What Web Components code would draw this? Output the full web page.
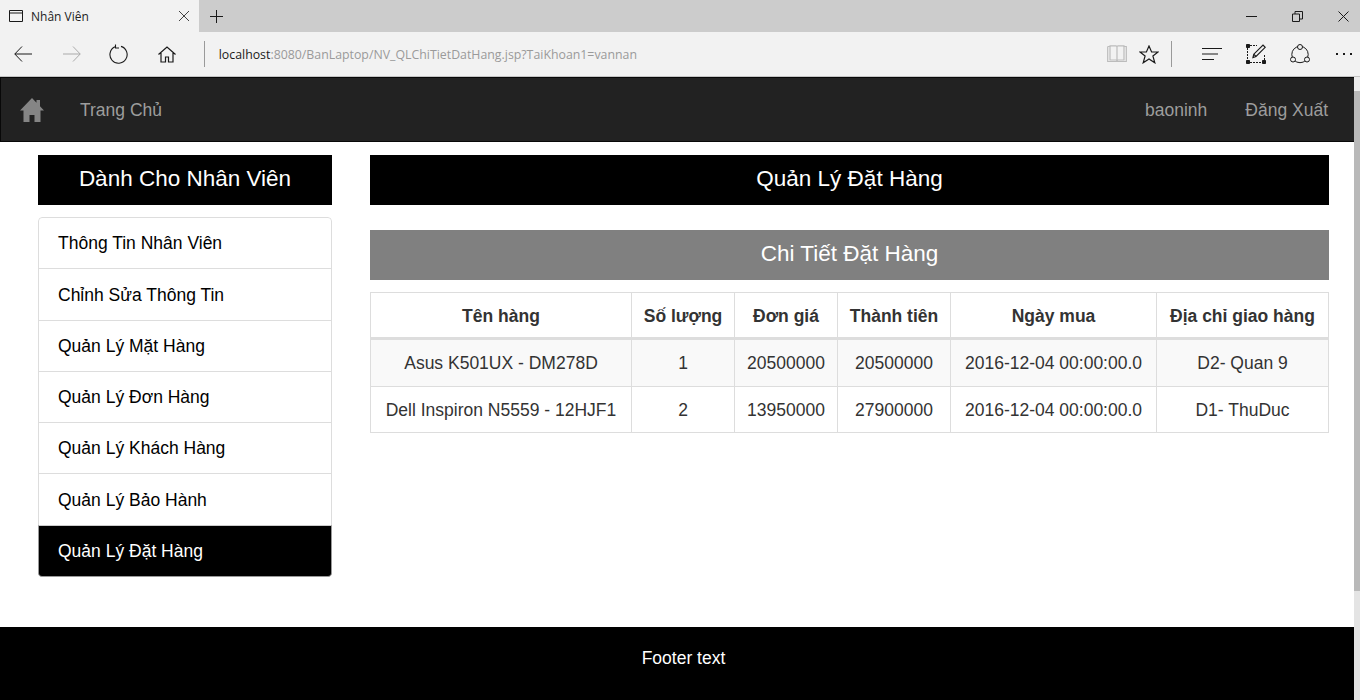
<!DOCTYPE html>
<html lang="vi">
<head>
<meta charset="utf-8">
<title>Nhân Viên</title>
<style>
  html, body { margin: 0; height: 100%; overflow: hidden; background: #fff; }
  body { display: flex; flex-direction: column; font-family: "Liberation Sans", Arial, sans-serif; }
  .viewport { flex: 1; min-height: 0; display: flex; }
  .page { flex: 1; min-width: 0; display: flex; flex-direction: column; }
  .content { height: 485px; display: flex; gap: 38px; padding: 13px 25px 0 38px; box-sizing: border-box; }
  .side { width: 294px; flex: none; }
  .main { flex: 1; min-width: 0; }
</style>
</head>
<body>
  <browser-chrome></browser-chrome>
  <div class="viewport">
    <div class="page">
      <site-navbar></site-navbar>
      <div class="content">
        <div class="side">
          <section-title>Dành Cho Nhân Viên</section-title>
          <side-menu>
            <menu-item>Thông Tin Nhân Viên</menu-item>
            <menu-item>Chỉnh Sửa Thông Tin</menu-item>
            <menu-item>Quản Lý Mặt Hàng</menu-item>
            <menu-item>Quản Lý Đơn Hàng</menu-item>
            <menu-item>Quản Lý Khách Hàng</menu-item>
            <menu-item>Quản Lý Bảo Hành</menu-item>
            <menu-item active>Quản Lý Đặt Hàng</menu-item>
          </side-menu>
        </div>
        <div class="main">
          <section-title>Quản Lý Đặt Hàng</section-title>
          <section-title variant="sub">Chi Tiết Đặt Hàng</section-title>
          <order-table></order-table>
        </div>
      </div>
      <site-footer>Footer text</site-footer>
    </div>
    <page-scrollbar></page-scrollbar>
  </div>

<script>
class BrowserChrome extends HTMLElement {
  constructor() {
    super();
    this.attachShadow({ mode: "open" });
  }

  static get styles() {
    return /* css */`
      :host {
        display: block;
        font-family: "Open Sans", "Noto Sans", sans-serif;
        color: #222;
      }

      svg {
        display: block;
        fill: none;
        stroke: #1a1a1a;
        stroke-width: 1;
      }

      .tabs {
        height: 32px;
        background: #ccc;
        display: flex;
        align-items: center;
      }

      .tab {
        width: 199px;
        height: 100%;
        background: #f2f2f2;
        display: flex;
        align-items: center;
        box-sizing: border-box;
        padding-left: 9px;
      }

      .tab .title {
        flex: 1;
        margin-left: 8px;
        font-size: 12px;
      }

      .tab .close {
        margin-right: 10px;
      }

      .plus {
        margin-left: 11px;
      }

      .win {
        margin-left: auto;
        margin-right: -6px;
        display: flex;
      }

      .win div {
        width: 46px;
        height: 32px;
        display: grid;
        place-items: center;
      }

      .bar {
        height: 44px;
        background: #f2f2f2;
        border-bottom: 1px solid #c4c4c4;
        display: flex;
        align-items: center;
      }

      .btn {
        width: 47.7px;
        height: 100%;
        display: grid;
        place-items: center;
        flex: none;
      }

      .btn.s {
        width: 32px;
      }

      .btn.m {
        width: 44px;
      }

      .sep {
        width: 1px;
        height: 26px;
        background: #9a9a9a;
        flex: none;
      }

      .url {
        flex: 1;
        margin-left: 14px;
        font-size: 12.33px;
        color: #9a9a9a;
        white-space: nowrap;
      }

      .url b {
        font-weight: 400;
        color: #1a1a1a;
      }
    `;
  }

  connectedCallback() {
    this.render();
  }

  render() {
    this.shadowRoot.innerHTML = /* html */`
    <style>${BrowserChrome.styles}</style>
    <div class="tabs">
      <div class="tab">
        <svg width="14" height="12" viewBox="0 0 14 12"><path d="M.5.5h13v11H.5zM.5 3h13" /></svg>
        <span class="title">Nhân Viên</span>
        <svg class="close" width="10" height="10" viewBox="0 0 10 10"><path d="M0 0l10 10M10 0L0 10" stroke="#444" /></svg>
      </div>
      <svg class="plus" width="13" height="13" viewBox="0 0 13 13"><path d="M6.5 0v13M0 6.5h13" /></svg>
      <div class="win">
        <div><svg width="11" height="11" viewBox="0 0 11 11"><path d="M0 5.5h11" /></svg></div>
        <div><svg width="11" height="11" viewBox="0 0 11 11"><path d="M.5 3h7v7.500h-7zM3 3V.5h7.500V8H7.500" /></svg></div>
        <div><svg width="11" height="11" viewBox="0 0 11 11"><path d="M.5.5l10 10M10.500.5l-10 10" /></svg></div>
      </div>
    </div>
    <div class="bar">
      <div class="btn"><svg width="18" height="16" viewBox="0 0 18 16" style="margin-right:2px"><path d="M18 8H.8M8 .5L.8 8 8 15.500" /></svg></div>
      <div class="btn"><svg width="18" height="16" viewBox="0 0 18 16" style="stroke:#aaa"><path d="M0 8h17.200M10 .5L17.200 8 10 15.500" /></svg></div>
      <div class="btn"><svg width="20" height="20" viewBox="0 0 20 20"><path d="M6 2.800a8.600 8.600 0 1 0 6-.4M6.500.500V4H10" stroke-width="1.100" /></svg></div>
      <div class="btn"><svg width="18" height="17" viewBox="0 0 18 17"><path d="M.5 8.500L9 1l8.500 7.500M3 7v9h4.500v-5h3v5H15V7" stroke-width="1.200" /></svg></div>
      <div class="sep" style="margin-left:13px"></div>
      <div class="url"><b>localhost</b>:8080/BanLaptop/NV_QLChiTietDatHang.jsp?TaiKhoan1=vannan</div>
      <div class="btn s"><svg width="20" height="18" viewBox="0 0 20 18" style="stroke:#bcbcbc"><path d="M.7 1.500h3M.7 1.500V16.500h18.600V1.500h-3M3 .8h6q1 0 1 1.500 0-1.500 1-1.500h6V15h-6q-1 0-1 1 0-1-1-1H3zM10 2.300V16" stroke-width="1.200" /></svg></div>
      <div class="btn s"><svg width="20" height="19" viewBox="0 0 20 19"><path d="M10 1l2.600 6h6.400l-5.100 4 1.900 6.800L10 14l-5.800 3.800L6.100 11 1 7h6.400z" stroke-width="1.200" /></svg></div>
      <div class="sep" style="margin-left:6px"></div>
      <div class="btn m" style="margin-left:18px"><svg width="20" height="14" viewBox="0 0 20 14"><path d="M0 1.500h20M0 7h16M0 12.500h12" stroke-width="1.200" /></svg></div>
      <div class="btn m"><svg width="20" height="20" viewBox="0 0 20 20"><path d="M1.500 4v12M18.500 11v5M4 1.500h7M4 18.500h12" stroke-dasharray="2 1" /><path d="M.5.500h3v3h-3zM.5 16.500h3v3h-3zM16.500 16.500h3v3h-3z" fill="#1a1a1a" /><path d="M7 13.500l.8-3.300L17 1l2.200 2.300L10 12.500zM7.800 10.200l2.200 2.300" stroke-width="1.200" /></svg></div>
      <div class="btn m"><svg width="20" height="20" viewBox="0 0 20 20"><circle cx="10" cy="10.500" r="8.200" /><circle cx="10" cy="3" r="2.500" fill="#f2f2f2" /><circle cx="3" cy="15.500" r="2.500" fill="#f2f2f2" /><circle cx="17" cy="15.500" r="2.500" fill="#f2f2f2" /></svg></div>
      <div class="btn s" style="margin-left:6px"><svg width="18" height="4" viewBox="0 0 18 4"><path d="M1 2h2M8 2h2M15 2h2" stroke-width="2" /></svg></div>
    </div>`;
  }
}

class SiteNavbar extends HTMLElement {
  constructor() {
    super();
    this.attachShadow({ mode: "open" });
  }

  static get styles() {
    return /* css */`
      :host {
        display: block;
        flex: none;
      }

      nav {
        height: 65px;
        box-sizing: border-box;
        background: #222;
        border: 1px solid #080808;
        border-right: 0;
        display: flex;
        align-items: center;
        padding: 2px 26px 0 19px;
        font-size: 17.5px;
        color: #9d9d9d;
      }

      svg {
        display: block;
        fill: #858585;
      }

      .home {
        margin: -2px 36px 0 0;
      }

      .right {
        margin-left: auto;
        display: flex;
        gap: 38px;
      }
    `;
  }

  connectedCallback() {
    this.render();
  }

  render() {
    this.shadowRoot.innerHTML = /* html */`
    <style>${SiteNavbar.styles}</style>
    <nav>
      <svg class="home" width="24" height="24" viewBox="0 0 24 24"><path d="M12 0L0 12.500h3.500V24h6v-7h5v7h6V12.500H24l-4-4.200V2h-3.500v2.700z" /></svg>
      <span>Trang Chủ</span>
      <div class="right">
        <span>baoninh</span>
        <span>Đăng Xuất</span>
      </div>
    </nav>`;
  }
}

class SectionTitle extends HTMLElement {
  constructor() {
    super();
    this.attachShadow({ mode: "open" });
  }

  static get styles() {
    return /* css */`
      :host {
        display: block;
        height: 50px;
        line-height: 48px;
        background: #000;
        color: #fff;
        text-align: center;
        font-size: 22.5px;
      }

      :host([variant="sub"]) {
        background: #808080;
        margin-top: 25px;
      }
    `;
  }

  connectedCallback() {
    this.shadowRoot.innerHTML = /* html */`
    <style>${SectionTitle.styles}</style>
    <slot></slot>`;
  }
}

class SideMenu extends HTMLElement {
  constructor() {
    super();
    this.attachShadow({ mode: "open" });
  }

  connectedCallback() {
    this.shadowRoot.innerHTML = /* html */`
    <style>
      :host {
        display: block;
        margin-top: 12px;
      }

      .list {
        display: flex;
        flex-direction: column;
        border-radius: 4px;
        overflow: hidden;
      }
    </style>
    <div class="list"><slot></slot></div>`;
  }
}

class MenuItem extends HTMLElement {
  constructor() {
    super();
    this.attachShadow({ mode: "open" });
  }

  connectedCallback() {
    this.shadowRoot.innerHTML = /* html */`
    <style>
      :host {
        display: block;
        box-sizing: border-box;
        height: 52.3px;
        margin-bottom: -1px;
        padding: 13.300px 19px 11.300px;
        line-height: 25.700px;
        font-size: 17.5px;
        color: #000;
        background: #fff;
        border: 1px solid #ddd;
      }

      :host(:first-child) {
        border-radius: 4px 4px 0 0;
      }

      :host(:last-child) {
        margin-bottom: 0;
        border-radius: 0 0 4px 4px;
      }

      :host([active]) {
        background: #000;
        color: #fff;
        border-left-color: #999;
        border-right-color: #999;
        border-bottom-color: #999;
        border-top-color: #ccc;
      }
    </style>
    <slot></slot>`;
  }
}

class OrderTable extends HTMLElement {
  constructor() {
    super();
    this.attachShadow({ mode: "open" });
  }

  static get styles() {
    return /* css */`
      :host {
        display: block;
        margin-top: 12px;
      }

      table {
        width: 958px;
        table-layout: fixed;
        border-collapse: collapse;
        font-size: 17.5px;
        color: #333;
      }

      th, td {
        border: 1px solid #ddd;
        padding: 2px 0 0;
        text-align: center;
        font-weight: 400;
        white-space: nowrap;
      }

      th {
        height: 42px;
        font-weight: 700;
        border-bottom-width: 3px;
      }

      td {
        height: 43.5px;
      }

      tbody tr:nth-child(odd) {
        background: #f9f9f9;
      }
    `;
  }

  connectedCallback() {
    this.render();
  }

  render() {
    const widths = [261, 103, 103, 113, 206, 172];
    const heads = ["Tên hàng", "Số lượng", "Đơn giá", "Thành tiên", "Ngày mua", "Địa chỉ giao hàng"];
    const rows = [
      ["Asus K501UX - DM278D", "1", "20500000", "20500000", "2016-12-04 00:00:00.0", "D2- Quan 9"],
      ["Dell Inspiron N5559 - 12HJF1", "2", "13950000", "27900000", "2016-12-04 00:00:00.0", "D1- ThuDuc"]
    ];

    this.shadowRoot.innerHTML = /* html */`
    <style>${OrderTable.styles}</style>
    <table>
      <colgroup>${widths.map(w => `<col style="width:${w}px">`).join("")}</colgroup>
      <thead><tr>${heads.map(h => `<th>${h}</th>`).join("")}</tr></thead>
      <tbody>
        ${rows.map(r => `<tr>${r.map(c => `<td>${c}</td>`).join("")}</tr>`).join("")}
      </tbody>
    </table>`;
  }
}

class SiteFooter extends HTMLElement {
  constructor() {
    super();
    this.attachShadow({ mode: "open" });
  }

  connectedCallback() {
    this.shadowRoot.innerHTML = /* html */`
    <style>
      :host {
        display: block;
        flex: 1;
        background: #000;
        color: #fff;
        font-size: 17.5px;
        text-align: center;
        line-height: 20px;
        padding: 21px 0 0 13px;
      }
    </style>
    <slot></slot>`;
  }
}

class PageScrollbar extends HTMLElement {
  constructor() {
    super();
    this.attachShadow({ mode: "open" });
  }

  connectedCallback() {
    this.shadowRoot.innerHTML = /* html */`
    <style>
      :host {
        display: block;
        flex: none;
        width: 6px;
        background: #e4e4e4;
      }

      .arrow {
        height: 14px;
        background: #ececec;
        color: #888;
      }

      .thumb {
        height: 500px;
        background: #b9b9b9;
      }
    </style>
    <div class="arrow"></div>
    <div class="thumb"></div>`;
  }
}

customElements.define("browser-chrome", BrowserChrome);
customElements.define("site-navbar", SiteNavbar);
customElements.define("section-title", SectionTitle);
customElements.define("side-menu", SideMenu);
customElements.define("menu-item", MenuItem);
customElements.define("order-table", OrderTable);
customElements.define("site-footer", SiteFooter);
customElements.define("page-scrollbar", PageScrollbar);
</script>
</body>
</html>
